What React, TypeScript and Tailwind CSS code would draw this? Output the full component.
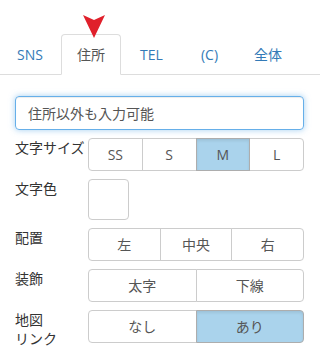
const tabs = [
  { name: 'SNS', w: 'w-[58px]' },
  { name: '住所', w: 'w-[60px]', active: true },
  { name: 'TEL', w: 'w-[57px]' },
  { name: '(C)', w: 'w-[55px]' },
  { name: '全体', w: 'w-[58px]' },
]

function Group({ items, active }: { items: string[]; active?: string }) {
  return (
    <div className="flex flex-1">
      {items.map((item, i) => (
        <div
          key={item}
          className={
            'flex h-[33px] flex-1 items-center justify-center border text-[14px] text-[#555] ' +
            (i > 0 ? '-ml-px ' : '') +
            (i === 0 ? 'rounded-l-[4px] ' : '') +
            (i === items.length - 1 ? 'rounded-r-[4px] ' : '') +
            (item === active
              ? 'relative border-[#adadad] bg-[#aad3ec] shadow-[inset_0_2px_3px_rgba(0,0,0,0.08)]'
              : 'border-[#ccc] bg-white')
          }
        >
          {item}
        </div>
      ))}
    </div>
  )
}

export default function App() {
  return (
    <div
      className="h-[356px] w-[320px] overflow-hidden bg-white text-[14px] text-[#333]"
      style={{ fontFamily: '"Open Sans", "Noto Sans CJK JP", sans-serif' }}
    >
      {/* tabs */}
      <div className="relative pt-[34px]">
        <svg className="absolute left-[83px] top-[15px]" width="22" height="23" viewBox="0 0 22 23">
          <polygon points="0,0 11,5 22,0 11,23" fill="#e0202b" />
        </svg>
        <div className="flex gap-[2px] border-b border-[#ddd] pl-[1px]">
          {tabs.map((tab) => (
            <div
              key={tab.name}
              className={
                tab.w +
                ' -mb-px flex h-[41px] items-center justify-center rounded-t-[4px] border leading-[20px] ' +
                (tab.active
                  ? 'border-[#ddd] border-b-white bg-white text-[#555]'
                  : 'border-transparent text-[#337ab7]')
              }
            >
              {tab.name}
            </div>
          ))}
        </div>
      </div>

      <div className="flex flex-col gap-[8px] pl-[15px] pr-[16px] pt-[21px]">
        <div className="flex h-[34px] items-center rounded-[4px] border border-[#66afe9] pl-[12px] text-[#555] shadow-[inset_0_1px_1px_rgba(0,0,0,0.075),0_0_6px_rgba(102,175,233,0.6)]">
          住所以外も入力可能
        </div>

        <div className="flex">
          <div className="w-[73px] leading-[20px]">文字サイズ</div>
          <Group items={['SS', 'S', 'M', 'L']} active="M" />
        </div>

        <div className="flex">
          <div className="w-[73px] leading-[20px]">文字色</div>
          <div className="h-[41px] w-[41px] rounded-[4px] border border-[#ccc] bg-white" />
        </div>

        <div className="flex">
          <div className="w-[73px] leading-[20px]">配置</div>
          <Group items={['左', '中央', '右']} />
        </div>

        <div className="flex">
          <div className="w-[73px] leading-[20px]">装飾</div>
          <Group items={['太字', '下線']} />
        </div>

        <div className="flex">
          <div className="w-[73px] leading-[19px]">
            地図
            <br />
            リンク
          </div>
          <Group items={['なし', 'あり']} active="あり" />
        </div>
      </div>
    </div>
  )
}
